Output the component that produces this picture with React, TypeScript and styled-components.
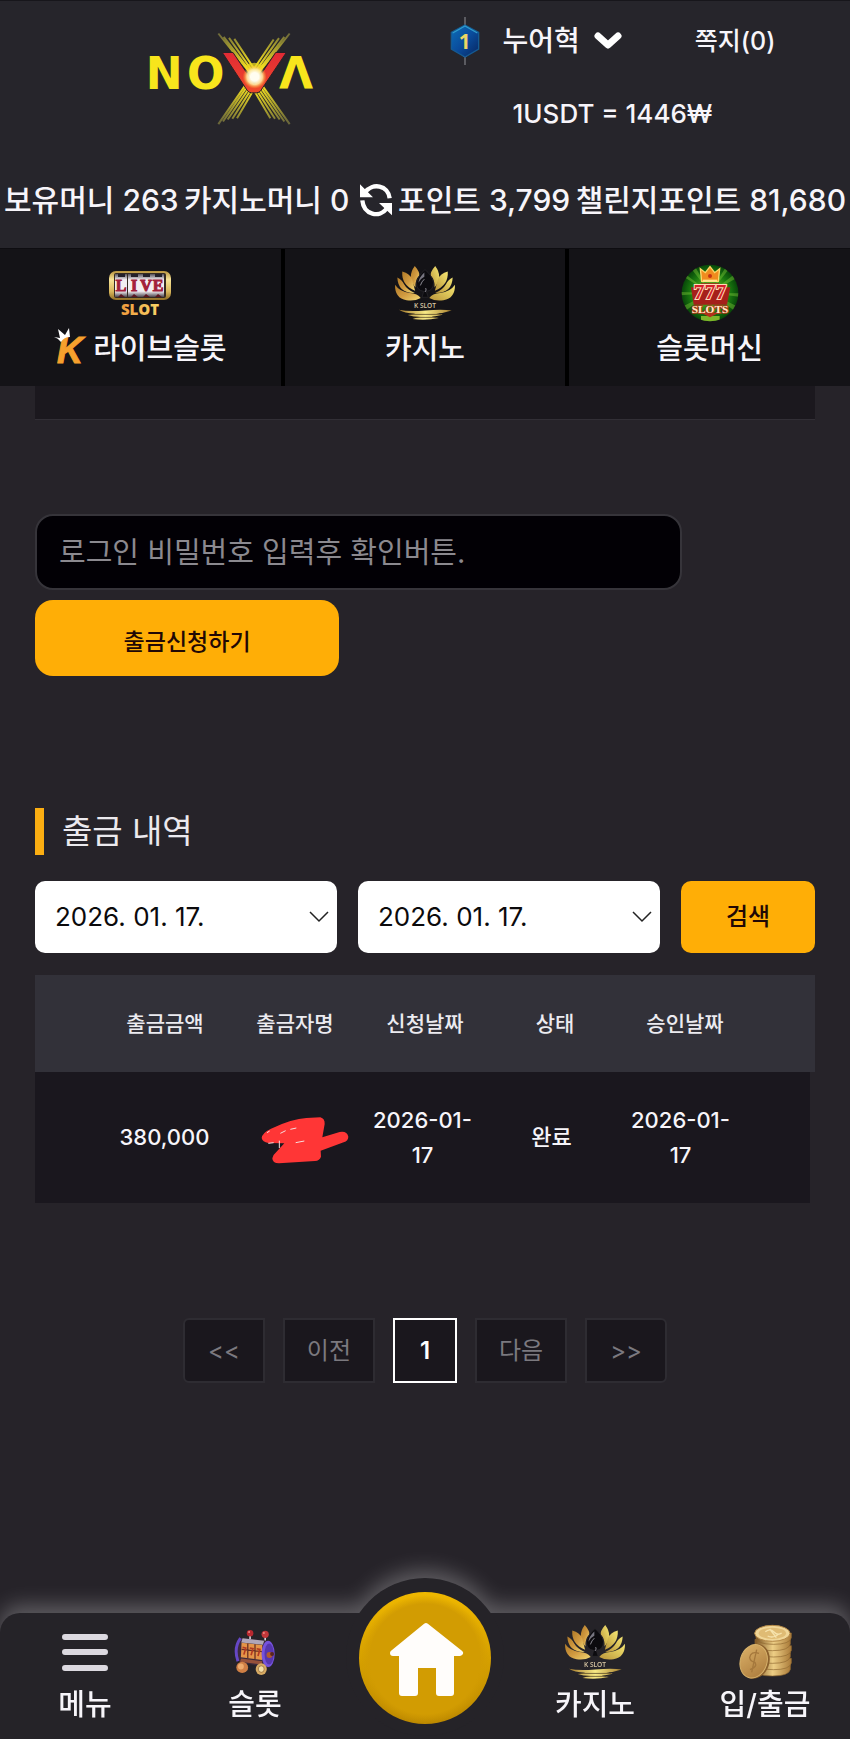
import React from "react";
import styled, { createGlobalStyle, css } from "styled-components";

const GlobalStyle = createGlobalStyle`
  *, *::before, *::after { box-sizing: border-box; }
  body {
    margin: 0;
    background: #262329;
    color: #f7f5fa;
    font-family: Inter, "Noto Sans CJK KR", sans-serif;
    font-size: 28px;
    font-weight: 500;
    line-height: 36px;
  }
  a { color: inherit; text-decoration: none; }
  button, input { font: inherit; color: inherit; margin: 0; }
  svg { display: block; flex: none; }
`;

const Page = styled.div`
  min-height: 100vh;
  display: flex;
  flex-direction: column;
`;

/* ---------- header ---------- */

const Header = styled.header`
  background: #26252b;
  border-top: 1px solid #17161b;
`;

const HeaderTop = styled.div`
  display: grid;
  grid-template-columns: 1fr 1fr;
  height: 150px;
`;

const LogoLink = styled.a`
  display: flex;
  justify-content: center;
  align-items: center;
  padding: 4px 0 0 40px;
`;

const Account = styled.div`
  display: flex;
  flex-direction: column;
  align-items: center;
  gap: 35px;
  padding: 16px 50px 0 0;
`;

const AccountRow = styled.div`
  display: flex;
  align-items: center;
  height: 48px;
`;

const UserButton = styled.button`
  display: flex;
  align-items: center;
  gap: 14px;
  margin: 0 73px 0 23px;
  padding: 0;
  border: 0;
  background: none;
`;

const Messages = styled.a`
  font-size: 25px;
`;

const Rate = styled.p`
  margin: 0;
  font-size: 26px;
  line-height: 28px;
`;

const Balances = styled.div`
  display: flex;
  align-items: center;
  justify-content: space-between;
  height: 97px;
  padding: 0 4px;
  font-size: 30px;
  white-space: nowrap;
`;

const IconButton = styled.button`
  display: flex;
  margin-left: 4px;
  padding: 0;
  border: 0;
  background: none;
`;

const Tabs = styled.nav`
  display: grid;
  grid-template-columns: repeat(3, 1fr);
  gap: 4px;
  border-top: 1px solid #0e0d11;
  background: #000;
`;

const Tab = styled.a`
  display: flex;
  flex-direction: column;
  align-items: center;
  gap: 8px;
  height: 137px;
  padding-top: 14px;
  background: #141317;
  font-size: 29px;
`;

const TabArt = styled.span`
  display: flex;
  align-items: center;
  height: 60px;
`;

const TabLabel = styled.span`
  display: flex;
  align-items: center;
  gap: 5px;
  height: 36px;
`;

/* ---------- content ---------- */

const Main = styled.main`
  flex: 1;
  padding: 0 35px 230px;
`;

const PanelEnd = styled.div`
  height: 34px;
  background: #1b181e;
  border-bottom: 1px solid #322f36;
`;

const WithdrawForm = styled.form`
  display: flex;
  flex-direction: column;
  align-items: flex-start;
  gap: 10px;
  margin-top: 94px;
`;

const PasswordInput = styled.input`
  width: 83%;
  height: 76px;
  padding: 0 22px;
  border: 2px solid #36343a;
  border-radius: 18px;
  background: #020005;
  font-size: 29px;
  font-weight: 400;
  &::placeholder { color: #8b898f; opacity: 1; }
`;

const accent = css`
  border: 0;
  background: #ffae06;
  color: #210805;
  font-weight: 500;
`;

const SubmitButton = styled.button`
  ${accent}
  width: 39%;
  height: 76px;
  padding: 8px 0 0;
  border-radius: 18px;
  font-size: 23px;
`;

const SectionTitle = styled.h2`
  margin: 132px 0 26px;
  padding-left: 18px;
  border-left: 9px solid #fbae12;
  font-size: 33px;
  font-weight: 400;
  line-height: 47px;
  color: #ebe9ee;
`;

const SearchRow = styled.form`
  display: grid;
  grid-template-columns: 1fr 1fr 134px;
  gap: 21px;
  height: 72px;
`;

const DateField = styled.label`
  display: flex;
  align-items: center;
  min-width: 0;
  padding: 0 8px 0 20px;
  border-radius: 10px;
  background: #fff;
  color: #0b0a0c;
`;

const DateInput = styled.input`
  flex: 1;
  min-width: 0;
  padding: 0;
  border: 0;
  outline: 0;
  background: none;
  font-size: 26px;
  font-weight: 400;
`;

const SearchButton = styled.button`
  ${accent}
  border-radius: 10px;
  font-size: 24px;
`;

const HistoryTable = styled.table`
  display: block;
  margin-top: 22px;
  font-size: 22px;
  line-height: 35px;
  text-align: center;
  thead, tbody { display: block; }
`;

const TableRow = styled.tr<{ $head?: boolean }>`
  display: grid;
  grid-template-columns: repeat(5, 1fr);
  align-items: center;
  padding: 0 65px;
  ${({ $head }) =>
    $head
      ? css`height: 97px; background: #323139; color: #ecebf0;`
      : css`height: 131px; margin-right: 5px; background: #1a171e;`}
`;

const HeadCell = styled.th`
  padding: 0;
  font-size: 21px;
  font-weight: 500;
`;

const Cell = styled.td<{ $covered?: boolean }>`
  padding: 0 12px;
  ${({ $covered }) => $covered && css`display: flex; justify-content: center; padding: 5px 0 0 22px;`}
`;

const Pagination = styled.nav`
  display: flex;
  justify-content: center;
  gap: 18px;
  margin-top: 115px;
`;

const PageButton = styled.button<{ $current?: boolean; $side?: "first" | "last" }>`
  min-width: 64px;
  height: 65px;
  padding: 0 ${({ $side }) => ($side ? "23px" : "22px")};
  border: 2px solid ${({ $current }) => ($current ? "#fff" : "#2e2c32")};
  border-radius: ${({ $side }) =>
    $side === "first" ? "6px 0 0 6px" : $side === "last" ? "0 6px 6px 0" : "0"};
  background: #1a171d;
  color: ${({ $current }) => ($current ? "#fff" : "#7b797f")};
  font-size: 24px;
  font-weight: ${({ $current }) => ($current ? 600 : 400)};
`;

/* ---------- bottom bar ---------- */

const BottomBar = styled.nav`
  position: sticky;
  bottom: 0;
  display: grid;
  grid-template-columns: repeat(5, 1fr);
  height: 126px;
  border-radius: 20px 20px 0 0;
  background: #252328;
  filter: drop-shadow(0 -8px 10px rgba(255, 255, 255, 0.26));
  font-size: 29px;
`;

const BottomLink = styled.a`
  display: flex;
  flex-direction: column;
  align-items: center;
  gap: 5px;
  padding-top: 9px;
`;

const BottomArt = styled.span`
  display: flex;
  align-items: center;
  height: 60px;
`;

const HomeSlot = styled.div`
  display: flex;
  justify-content: center;
`;

const HomeLink = styled.a`
  flex: none;
  width: 158px;
  height: 158px;
  margin-top: -35px;
  padding: 14px 13px 12px;
  border-radius: 50%;
  background: #252328;
`;

/* ---------- drawings ---------- */

const NovaLogo = () => (
  <svg width="180" height="97" viewBox="38 60 540 290" role="img" aria-label="NOVA">
    <defs>
      <radialGradient id="novaRay" gradientUnits="userSpaceOnUse" cx="372" cy="200" r="170">
        <stop offset="0.2" stopColor="#f3df20" />
        <stop offset="0.65" stopColor="#a49b2e" />
        <stop offset="1" stopColor="#6a673b" />
      </radialGradient>
      <radialGradient id="novaCore">
        <stop offset="0.35" stopColor="#fffdf0" />
        <stop offset="0.65" stopColor="#ffe9a0" stopOpacity="0.9" />
        <stop offset="1" stopColor="#ffb020" stopOpacity="0" />
      </radialGradient>
      <linearGradient id="novaRed" x1="0" x2="0" y1="0" y2="1">
        <stop offset="0" stopColor="#e12a35" />
        <stop offset="1" stopColor="#f04a2a" />
      </linearGradient>
    </defs>
    <g stroke="url(#novaRay)" strokeWidth="6" fill="none">
      <path d="M264 70 L372 205 M280 80 L376 205 M296 83 L382 205 M312 86 L386 198" />
      <path d="M478 70 L372 205 M462 80 L366 205 M446 84 L360 205 M430 88 L356 198" />
      <path d="M264 342 L350 218 M278 334 L358 218 M292 328 L366 220 M306 326 L374 220 M320 324 L380 222" />
      <path d="M478 342 L390 218 M462 334 L382 218 M448 328 L374 220 M434 326 L366 220 M420 324 L360 222" />
    </g>
    <g fill="#f8e51c" fontFamily="DejaVu Sans" fontWeight="700" fontSize="132">
      <text x="46" y="236">N</text>
      <text x="170" y="236">O</text>
      <text x="446" y="236">Λ</text>
    </g>
    <path d="M276 127 H308 L372 222 L436 127 H468 L392 240 Q388 248 378 248 H364 Q356 248 350 240 Z" fill="url(#novaRed)" stroke="#2b2025" strokeWidth="3" />
    <path d="M346 165 L372 205 L398 165 Q372 150 346 165Z" fill="#e8d51f" opacity="0.75" />
    <circle cx="373" cy="200" r="36" fill="url(#novaCore)" />
  </svg>
);

const LevelBadge = () => (
  <svg width="30" height="48" viewBox="0 0 90 144" role="img" aria-label="1">
    <defs>
      <linearGradient id="badgeBlue" x1="0" y1="0" x2="1" y2="1">
        <stop offset="0" stopColor="#0c6fb8" />
        <stop offset="0.5" stopColor="#0a4c9c" />
        <stop offset="1" stopColor="#07255f" />
      </linearGradient>
    </defs>
    <path d="M45 0V24M45 116V144M39 118H51" stroke="#77777d" strokeWidth="4" />
    <path d="M45 24 L86 46 V96 L45 120 L4 96 V46Z" fill="url(#badgeBlue)" stroke="#155a92" strokeWidth="4" />
    <path d="M8 48 L45 27 L82 48" stroke="#2f9ccc" strokeWidth="4" fill="none" />
    <text x="44" y="96" textAnchor="middle" fontFamily="Open Sans" fontWeight="700" fontSize="62" fill="#ecd765">1</text>
  </svg>
);

const ChevronBold = () => (
  <svg width="28" height="18" viewBox="0 0 28 18" fill="none" stroke="#fff" strokeWidth="7" strokeLinecap="round" strokeLinejoin="round">
    <path d="M4 4 L14 13 L24 4" />
  </svg>
);

const ChevronThin = () => (
  <svg width="20" height="12" viewBox="0 0 20 12" fill="none" stroke="#222" strokeWidth="1.5">
    <path d="M1 1 L10 10 L19 1" />
  </svg>
);

const RefreshIcon = () => (
  <svg width="34" height="34" viewBox="0 0 102 102" fill="none" stroke="#fff" strokeWidth="13">
    <path d="M18 28 C40 -2 88 6 92 46" />
    <path d="M10 52 C14 96 62 106 84 76" />
    <path d="M3 4 V43 H42 Z M99 97 V60 H60 Z" fill="#fff" stroke="none" />
  </svg>
);

const LiveSlotArt = () => (
  <svg width="64" height="52" viewBox="0 -3 64 52" role="img" aria-label="LIVE SLOT">
    <defs>
      <linearGradient id="liveGold" x1="0" y1="0" x2="0" y2="1">
        <stop offset="0" stopColor="#b8923d" />
        <stop offset="0.3" stopColor="#f6e397" />
        <stop offset="0.7" stopColor="#d9b75c" />
        <stop offset="1" stopColor="#8f6c24" />
      </linearGradient>
      <linearGradient id="liveReel" x1="0" y1="0" x2="0" y2="1">
        <stop offset="0" stopColor="#55505a" />
        <stop offset="0.25" stopColor="#f3eef2" />
        <stop offset="0.75" stopColor="#f3eef2" />
        <stop offset="1" stopColor="#4a444c" />
      </linearGradient>
      <linearGradient id="slotWord" x1="0" y1="0" x2="1" y2="0">
        <stop offset="0" stopColor="#f09a3c" />
        <stop offset="1" stopColor="#f7d468" />
      </linearGradient>
    </defs>
    <rect x="1" y="1" width="62" height="29" rx="7" fill="url(#liveGold)" />
    <rect x="6" y="3" width="52" height="25" rx="2" fill="#352a22" />
    {[7, 20, 32, 44].map((x) => (
      <rect key={x} x={x} y="4" width="12" height="23" fill="url(#liveReel)" />
    ))}
    <path d="M10 4h7v3h-7zM23 4h7v3h-7zM35 4h7v3h-7zM47 4h7v3h-7z" fill="#23202a" />
    <path d="M10 27l3-3 4 3zM23 27l3-3 4 3zM35 27l3-3 4 3zM47 27l3-3 4 3z" fill="#5a1822" />
    <g fontFamily="Liberation Serif" fontWeight="700" fontSize="16" fill="#a3213b" stroke="#a3213b" textAnchor="middle">
      <text x="13" y="21">L</text>
      <text x="26" y="21">I</text>
      <text x="38" y="21">V</text>
      <text x="50" y="21">E</text>
    </g>
    <text x="32" y="45" textAnchor="middle" fontFamily="Open Sans" fontWeight="800" fontSize="15" fill="url(#slotWord)">SLOT</text>
  </svg>
);

const KMark = () => (
  <svg width="34" height="48" viewBox="0 -4 34 48" role="img" aria-label="K">
    <text x="3" y="34" fontFamily="Liberation Sans" fontWeight="700" fontStyle="italic" fontSize="36" fill="#f6a02d" stroke="#f6a02d">K</text>
    <path d="M0 8 L6 9 L4 0 L11 6 L15 -1 L16 8 Q10 8 7 13 Q4 9 0 8Z" fill="#fff" />
  </svg>
);

const LotusArt = ({ id }: { id: string }) => (
  <svg width="62" height="56" viewBox="432 160 188 170" role="img" aria-label="K SLOT">
    <defs>
      <linearGradient id={id + "l"} x1="0" y1="0" x2="1" y2="1">
        <stop offset="0" stopColor="#b07a28" />
        <stop offset="0.5" stopColor="#d19a40" />
        <stop offset="1" stopColor="#f2da74" />
      </linearGradient>
      <linearGradient id={id + "r"} x1="1" y1="0" x2="0" y2="1">
        <stop offset="0" stopColor="#f5e573" />
        <stop offset="0.5" stopColor="#d8bf55" />
        <stop offset="1" stopColor="#b9933a" />
      </linearGradient>
      <linearGradient id={id + "b"} x1="0" x2="1">
        <stop offset="0" stopColor="#a57a2c" />
        <stop offset="0.5" stopColor="#f8ea85" />
        <stop offset="1" stopColor="#a8802f" />
      </linearGradient>
    </defs>
    <g fill={`url(#${id}l)`}>
      <path d="M495 163 Q512 183 508 193 Q496 204 497 228 Q470 196 495 163Z" />
      <path d="M457 180 Q480 186 487 204 L496 238 Q454 222 457 180Z" />
      <path d="M442 198 Q456 204 462 218 Q472 236 495 245 Q444 246 442 198Z" />
      <path d="M435 220 Q450 242 480 245 Q504 247 513 260 Q494 271 470 267 Q434 261 435 220Z" />
    </g>
    <g fill={`url(#${id}r)`}>
      <path d="M557 163 Q540 183 544 193 Q556 204 555 228 Q582 196 557 163Z" />
      <path d="M595 180 Q572 186 565 204 L556 238 Q598 222 595 180Z" />
      <path d="M610 198 Q596 204 590 218 Q580 236 557 245 Q608 246 610 198Z" />
      <path d="M617 220 Q602 242 572 245 Q548 247 539 260 Q558 271 582 267 Q618 261 617 220Z" />
    </g>
    <path d="M526 174 Q546 190 552 213 Q552 238 530 240 L536 258 H517 L522 240 Q500 238 500 213 Q506 190 526 174Z" fill="#0c0b0f" stroke="#2c2b30" strokeWidth="2" />
    <path d="M524 183 Q507 199 506 214 Q514 200 524 196Z" fill="#777580" />
    <path d="M528 230 Q532 236 526 242 M512 222 Q516 210 524 203" fill="none" stroke="#8b8992" strokeWidth="3" />
    <text x="526" y="291" textAnchor="middle" fontFamily="Open Sans" fontWeight="600" fontSize="20" fill="#d8c7a4">K SLOT</text>
    <path d="M447 296 Q476 302 527 298 T607 298 Q584 306 560 307 Q576 309 580 311 Q560 315 546 317 Q560 319 568 321 Q530 329 488 324 Q500 320 512 318 Q490 318 474 312 Q488 309 497 308 Q462 307 447 296Z" fill={`url(#${id}b)`} />
    <path d="M478 310 H574 M492 319 H560" stroke="#3a2c17" strokeWidth="2" />
  </svg>
);

const SevensArt = () => (
  <svg width="58" height="58" viewBox="0 0 174 174" role="img" aria-label="777 SLOTS">
    <defs>
      <radialGradient id="sevenBg">
        <stop offset="0.2" stopColor="#6dbd26" />
        <stop offset="0.7" stopColor="#19770f" />
        <stop offset="1" stopColor="#064308" />
      </radialGradient>
      <clipPath id="sevenClip"><circle cx="87" cy="87" r="85" /></clipPath>
    </defs>
    <g clipPath="url(#sevenClip)">
      <rect width="174" height="174" fill="url(#sevenBg)" />
      <path d="M87 87 L0 20 L0 34Z M87 87 L20 0 L38 0Z M87 87 L174 20 V38Z M87 87 L140 0 L156 0Z M87 87 L0 130 V150Z M87 87 L174 130 V150Z M87 87 L174 88 V98Z M87 87 L0 84 V94Z" fill="#86d03c" opacity="0.4" />
      <path d="M60 156 H116 V174 H60Z" fill="#7db52a" />
    </g>
    <path d="M62 52 L58 14 L73 26 L87 8 L101 26 L116 14 L112 52Z" fill="#f08c1f" stroke="#ffd76a" strokeWidth="4" />
    <path d="M66 50 H108" stroke="#ffe58c" strokeWidth="6" />
    <circle cx="87" cy="36" r="6" fill="#c53112" />
    <path d="M30 70 H60 V58 H114 V70 H148 L138 122 H38Z" fill="#a5201a" />
    <text x="87" y="104" textAnchor="middle" fontFamily="Liberation Serif" fontWeight="700" fontSize="66" fill="#d5202a" stroke="#ffdcb8" strokeWidth="6" paintOrder="stroke">777</text>
    <path d="M60 146 H114 L87 160Z" fill="#b3301c" />
    <text x="87" y="146" textAnchor="middle" fontFamily="Liberation Serif" fontWeight="700" fontSize="34" fill="#fff0c8" stroke="#b0361d" strokeWidth="5" paintOrder="stroke">SLOTS</text>
  </svg>
);

const MenuIcon = () => (
  <svg width="46" height="37" viewBox="0 0 46 37" stroke="#dcd9e0" strokeWidth="6" strokeLinecap="round">
    <path d="M3 3H43M3 18H43M3 34H43" />
  </svg>
);

const SlotMachineArt = () => (
  <svg width="42" height="48" viewBox="704 170 128 144">
    <path d="M753 190V205M799 192V208" stroke="#d9cfd8" strokeWidth="5" />
    <circle cx="753" cy="185" r="10" fill="#b8282f" />
    <circle cx="799" cy="188" r="11" fill="#c3373a" />
    <circle cx="750" cy="181" r="3" fill="#ef8b85" />
    <circle cx="795" cy="184" r="3" fill="#ef8b85" />
    <path d="M724 200 L804 208 Q834 240 812 290 L722 274 Q700 240 724 200Z" fill="#3c2a3b" />
    <path d="M730 200 L796 208 L792 220 L726 213Z" fill="#b0a6b8" />
    <path d="M727 214 L790 221 V266 L725 258Z" fill="#e49448" />
    <path d="M746 216V261M768 218V264M727 234L790 241" stroke="#6b3024" strokeWidth="4" />
    <path d="M730 228l10 2-6 20M752 230l10 2-6 20M773 232l10 2-6 20" stroke="#b23a22" strokeWidth="5" fill="none" />
    <path d="M726 262 L790 270 L788 280 L722 272Z" fill="#96513a" />
    <path d="M724 200 Q702 230 716 270" stroke="#6647c4" strokeWidth="9" fill="none" />
    <ellipse cx="808" cy="248" rx="20" ry="40" fill="#7552dc" />
    <ellipse cx="811" cy="248" rx="14" ry="32" fill="#5636ad" />
    <circle cx="812" cy="251" r="9" fill="#b15a31" />
    <circle cx="820" cy="248" r="6" fill="#5a261d" />
    <ellipse cx="729" cy="289" rx="18" ry="17" fill="#cf7f45" />
    <ellipse cx="725" cy="286" rx="9" ry="9" fill="#edab6d" />
    <ellipse cx="787" cy="294" rx="17" ry="18" fill="#d7aa63" />
    <ellipse cx="787" cy="294" rx="9" ry="10" fill="#f3e0a9" stroke="#8a5c2c" strokeWidth="2" />
  </svg>
);

const CoinsArt = () => (
  <svg width="54" height="56" viewBox="947 163 162 168">
    <defs>
      <linearGradient id="coinSide" x1="0" x2="1">
        <stop offset="0" stopColor="#7d5523" />
        <stop offset="0.5" stopColor="#edce85" />
        <stop offset="1" stopColor="#ab7c3a" />
      </linearGradient>
      <linearGradient id="coinFace" x1="0" y1="0" x2="1" y2="1">
        <stop offset="0" stopColor="#dcb269" />
        <stop offset="1" stopColor="#a9783a" />
      </linearGradient>
    </defs>
    {[299, 280, 261, 242, 223, 204].map((y, i) => (
      <path
        key={y}
        d={`M${998 + (i % 2) * 3} ${y - 14} v14 q2 20 52 20 q50 0 54 -20 v-14Z`}
        fill="url(#coinSide)"
        stroke="#8f6830"
        strokeWidth="2"
      />
    ))}
    <ellipse cx="1050" cy="191" rx="53" ry="24" fill="#f0d698" stroke="#b48846" strokeWidth="3" />
    <ellipse cx="1050" cy="191" rx="41" ry="17" fill="#dfbb74" />
    <path d="M1029 186 Q1044 175 1055 187 T1078 190 M1036 199 Q1050 206 1066 196 M1042 178 L1062 204" stroke="#f6e3ad" strokeWidth="4" fill="none" />
    <ellipse cx="999" cy="275" rx="42" ry="53" transform="rotate(18 999 275)" fill="#8b602c" />
    <ellipse cx="994" cy="275" rx="40" ry="51" transform="rotate(18 994 275)" fill="url(#coinFace)" stroke="#d6b16a" strokeWidth="3" />
    <path d="M1010 251 Q985 243 982 264 Q984 276 998 278 Q1006 292 983 300 M1003 240 L988 308" stroke="#a5783c" strokeWidth="4" fill="none" />
  </svg>
);

const HomeArt = () => (
  <svg width="132" height="132" viewBox="0 0 132 132">
    <defs>
      <linearGradient id="homeRim" x1="0" y1="0" x2="0" y2="1">
        <stop offset="0" stopColor="#efb800" />
        <stop offset="1" stopColor="#bd8900" />
      </linearGradient>
      <radialGradient id="homeFace">
        <stop offset="0.86" stopColor="#d29c02" />
        <stop offset="1" stopColor="#d29c02" stopOpacity="0" />
      </radialGradient>
    </defs>
    <circle cx="66" cy="66" r="66" fill="url(#homeRim)" />
    <circle cx="66" cy="67" r="64" fill="url(#homeFace)" />
    <path d="M67 34 L101 61 L92 61 V101 H80 V73 H56 V101 H43 V61 L34 61Z" fill="#fffdfb" stroke="#fffdfb" strokeWidth="6" strokeLinejoin="round" />
  </svg>
);

const Scribble = () => (
  <svg width="88" height="48" viewBox="726 976 264 144" role="img" aria-label="가려진 이름">
    <path d="M728 1042 Q730 1026 756 1014 Q820 984 862 982 L904 980 Q918 984 917 1000 L910 1040 L962 1024 Q984 1020 988 1038 Q988 1050 974 1055 L905 1080 L906 1098 Q902 1110 888 1111 L780 1118 Q760 1118 760 1103 Q762 1092 772 1084 L796 1058 L748 1057 Q730 1054 728 1042Z" fill="#ff3636" />
    <path d="M784 1028 L800 1020 M814 1016 L832 1012 M830 1056 L856 1051 M744 1026 L752 1021 M748 1058 L764 1056 M781 1050 V1072" stroke="#f6dede" strokeWidth="3" />
  </svg>
);

/* ---------- page ---------- */

export default function App() {
  return (
    <Page>
      <GlobalStyle />
      <Header>
        <HeaderTop>
          <LogoLink href="#"><NovaLogo /></LogoLink>
          <Account>
            <AccountRow>
              <LevelBadge />
              <UserButton type="button">누어혁<ChevronBold /></UserButton>
              <Messages href="#">쪽지(0)</Messages>
            </AccountRow>
            <Rate>1USDT = 1446₩</Rate>
          </Account>
        </HeaderTop>
        <Balances>
          <span>보유머니 263</span>
          <span>카지노머니 0</span>
          <IconButton type="button" aria-label="새로고침"><RefreshIcon /></IconButton>
          <span>포인트 3,799</span>
          <span>챌린지포인트 81,680</span>
        </Balances>
        <Tabs>
          <Tab href="#">
            <TabArt><LiveSlotArt /></TabArt>
            <TabLabel><KMark />라이브슬롯</TabLabel>
          </Tab>
          <Tab href="#">
            <TabArt><LotusArt id="lotusTab" /></TabArt>
            <TabLabel>카지노</TabLabel>
          </Tab>
          <Tab href="#">
            <TabArt><SevensArt /></TabArt>
            <TabLabel>슬롯머신</TabLabel>
          </Tab>
        </Tabs>
      </Header>

      <Main>
        <PanelEnd />
        <WithdrawForm onSubmit={(e) => e.preventDefault()}>
          <PasswordInput
            type="password"
            aria-label="로그인 비밀번호"
            placeholder="로그인 비밀번호 입력후 확인버튼."
          />
          <SubmitButton type="submit">출금신청하기</SubmitButton>
        </WithdrawForm>

        <SectionTitle>출금 내역</SectionTitle>
        <SearchRow onSubmit={(e) => e.preventDefault()}>
          <DateField>
            <DateInput type="text" aria-label="시작일" defaultValue="2026. 01. 17." />
            <ChevronThin />
          </DateField>
          <DateField>
            <DateInput type="text" aria-label="종료일" defaultValue="2026. 01. 17." />
            <ChevronThin />
          </DateField>
          <SearchButton type="submit">검색</SearchButton>
        </SearchRow>

        <HistoryTable>
          <thead>
            <TableRow $head>
              {["출금금액", "출금자명", "신청날짜", "상태", "승인날짜"].map((name) => (
                <HeadCell key={name} scope="col">{name}</HeadCell>
              ))}
            </TableRow>
          </thead>
          <tbody>
            <TableRow>
              <Cell>380,000</Cell>
              <Cell $covered><Scribble /></Cell>
              <Cell>2026-01-17</Cell>
              <Cell>완료</Cell>
              <Cell>2026-01-17</Cell>
            </TableRow>
          </tbody>
        </HistoryTable>

        <Pagination aria-label="페이지">
          <PageButton type="button" $side="first">&lt;&lt;</PageButton>
          <PageButton type="button">이전</PageButton>
          <PageButton type="button" $current aria-current="page">1</PageButton>
          <PageButton type="button">다음</PageButton>
          <PageButton type="button" $side="last">&gt;&gt;</PageButton>
        </Pagination>
      </Main>

      <BottomBar>
        <BottomLink href="#"><BottomArt><MenuIcon /></BottomArt>메뉴</BottomLink>
        <BottomLink href="#"><BottomArt><SlotMachineArt /></BottomArt>슬롯</BottomLink>
        <HomeSlot><HomeLink href="#" aria-label="홈"><HomeArt /></HomeLink></HomeSlot>
        <BottomLink href="#"><BottomArt><LotusArt id="lotusNav" /></BottomArt>카지노</BottomLink>
        <BottomLink href="#"><BottomArt><CoinsArt /></BottomArt>입/출금</BottomLink>
      </BottomBar>
    </Page>
  );
}
